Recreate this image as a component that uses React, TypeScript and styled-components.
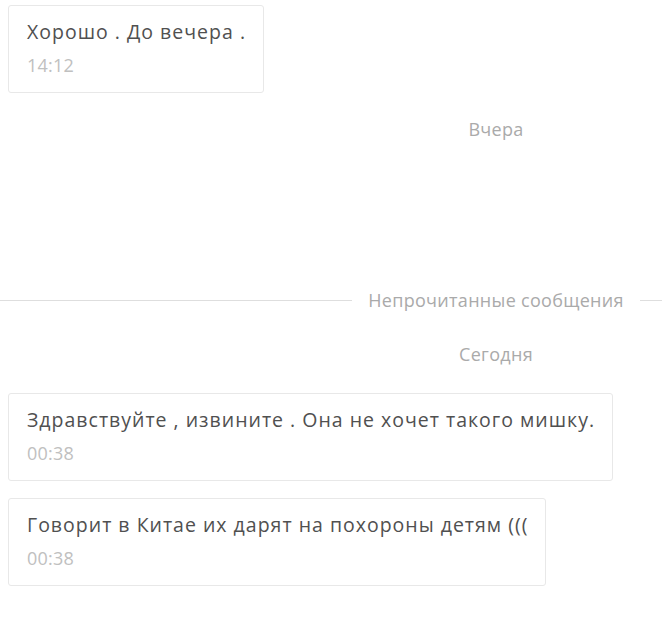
import * as React from 'react'
import styled, { createGlobalStyle } from 'styled-components'

const GlobalStyle = createGlobalStyle`
	html, body {
		margin: 0;
		padding: 0;
		background: #fff;
		overflow: hidden;
	}
	body {
		font-family: 'Open Sans', 'Noto Sans', sans-serif;
	}
`

const ChatFeed = styled.div`
	width: 992px;
	padding: 5px 8px 0 8px;
	box-sizing: border-box;
	display: flex;
	flex-direction: column;
	align-items: flex-start;
`

const Bubble = styled.div<{ gapAfter?: number }>`
	box-sizing: border-box;
	background: #fff;
	border: 1px solid #e8e8e8;
	border-radius: 3px;
	padding: 11px 17px 12px 18px;
	margin-bottom: ${(p) => (p.gapAfter ?? 0) + 'px'};
`

const MessageText = styled.div`
	font-size: 19.5px;
	line-height: 30px;
	letter-spacing: 1px;
	color: #505050;
	white-space: nowrap;
`

const MessageTime = styled.div`
	font-size: 18px;
	line-height: 30px;
	margin-top: 3px;
	letter-spacing: 0.2px;
	color: #c0c0c0;
`

const DayLabel = styled.div<{ top: number; bottom: number }>`
	align-self: stretch;
	margin: ${(p) => `${p.top}px -8px ${p.bottom}px -8px`};
	text-align: center;
	font-size: 18px;
	line-height: 24px;
	letter-spacing: 0.3px;
	color: #aaaaaa;
`

const Divider = styled.div`
	align-self: stretch;
	margin: 0 -8px 30px -8px;
	display: flex;
	align-items: center;
	gap: 16px;
	&::before,
	&::after {
		content: '';
		flex: 1 1 0;
		height: 1px;
		background: #dedede;
	}
`

const DividerText = styled.span`
	font-size: 18px;
	line-height: 24px;
	letter-spacing: 0.3px;
	color: #aaaaaa;
	white-space: nowrap;
`

type Message = {
	id: string
	text: string
	time: string
}

const yesterday: Message[] = [{ id: 'm1', text: 'Хорошо . До вечера .', time: '14:12' }]

const today: Message[] = [
	{ id: 'm2', text: 'Здравствуйте , извините . Она не хочет такого мишку.', time: '00:38' },
	{ id: 'm3', text: 'Говорит в Китае их дарят на похороны детям (((', time: '00:38' },
]

const MessageBubble = ({ text, time, gapAfter }: Message & { gapAfter?: number }) => (
	<Bubble gapAfter={gapAfter}>
		<MessageText>{text}</MessageText>
		<MessageTime>{time}</MessageTime>
	</Bubble>
)

export default function App() {
	return (
		<>
			<GlobalStyle />
			<ChatFeed>
				{yesterday.map((m) => (
					<MessageBubble key={m.id} {...m} />
				))}
				<DayLabel top={24} bottom={147}>
					Вчера
				</DayLabel>
				<Divider>
					<DividerText>Непрочитанные сообщения</DividerText>
				</Divider>
				<DayLabel top={0} bottom={27}>
					Сегодня
				</DayLabel>
				{today.map((m) => (
					<MessageBubble key={m.id} {...m} gapAfter={17} />
				))}
			</ChatFeed>
		</>
	)
}
